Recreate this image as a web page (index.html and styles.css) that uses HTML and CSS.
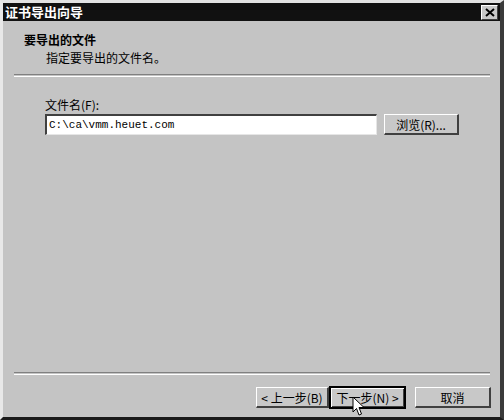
FILE: index.html
```html
<!DOCTYPE html>
<html>
<head>
<meta charset="utf-8" />
<title>证书导出向导</title>
<link rel="stylesheet" href="styles.css">
</head>
<body>
  <section class="wizard">
    <header class="titlebar">
      <span class="title">证书导出向导</span>
      <a class="close" href="javascript:;">
        <svg width="10" height="9" viewBox="0 0 10 9"><path d="M1 1 L9 8 M9 1 L1 8" stroke="#000" stroke-width="2" fill="none"/></svg>
      </a>
    </header>
    <div class="head">
      <h1>要导出的文件</h1>
      <p>指定要导出的文件名。</p>
    </div>
    <div class="rule"></div>
    <div class="body">
      <label class="field-label">文件名(F):</label>
      <div class="field-row">
        <input class="file-input" type="text" value="C:\ca\vmm.heuet.com" />
        <button class="btn browse">浏览(R)...</button>
      </div>
    </div>
    <div class="rule"></div>
    <footer class="actions">
      <button class="btn">&lt; 上一步(B)</button>
      <button class="btn default">下一步(N) &gt;</button>
      <button class="btn cancel">取消</button>
    </footer>
    <svg class="cursor" width="13" height="21" viewBox="0 0 13 21"><path d="M1 1 L1 16 L4.5 12.5 L7 19 L9.5 18 L7 11.5 L12 11.5 Z" fill="#fff" stroke="#000" stroke-width="1"/></svg>
  </section>
</body>
</html>
```

FILE: styles.css
```css
html, body {
  width: 100%;
  height: 100%;
}
body {
  margin: 0;
  overflow: hidden;
  background: #c4c4c4;
  font-family: "Noto Sans CJK SC", "DejaVu Sans", sans-serif;
  font-size: 12px;
  color: #000;
}
.wizard {
  position: relative;
  width: 504px;
  height: 420px;
  box-sizing: border-box;
  display: flex;
  flex-direction: column;
  background: #c4c4c4;
  border-top: 3px solid #e2e2e2;
  border-left: 3px solid #e8e8e8;
  border-right: 4px solid #3a3a3a;
  border-bottom: 3px solid #1a1a1a;
}
.titlebar {
  height: 18px;
  display: flex;
  align-items: center;
  justify-content: space-between;
  padding: 0 2px 0 2px;
  background: #111;
}
.title {
  color: #fff;
  font-weight: bold;
  font-size: 13px;
  line-height: 18px;
}
.close {
  width: 15px;
  height: 13px;
  display: flex;
  align-items: center;
  justify-content: center;
  background: #c8c8c8;
  border-top: 1px solid #fff;
  border-left: 1px solid #fff;
  border-right: 1px solid #404040;
  border-bottom: 1px solid #404040;
}
.head {
  height: 53px;
  padding: 12px 0 0 21px;
  box-sizing: border-box;
}
.head h1 {
  margin: 0;
  font-size: 12px;
  line-height: 14px;
  font-weight: bold;
}
.head p {
  margin: 4px 0 0 22px;
  line-height: 14px;
}
.rule {
  margin: 0 10px 0 11px;
  height: 1px;
  border-top: 1px solid #808080;
  border-bottom: 1px solid #fff;
}
.body {
  flex: 1;
  padding: 20px 0 0 42px;
}
.field-label {
  display: block;
  line-height: 16px;
  margin-bottom: 1px;
}
.field-row {
  display: flex;
  align-items: center;
  gap: 6px;
}
.file-input {
  width: 332px;
  height: 21px;
  box-sizing: border-box;
  margin: 0;
  padding: 0 2px;
  background: #fff;
  border-top: 2px solid #404040;
  border-left: 2px solid #404040;
  border-right: 1px solid #e6e6e6;
  border-bottom: 1px solid #e6e6e6;
  font-family: "Liberation Mono", monospace;
  font-size: 11px;
  color: #000;
  outline: none;
}
.btn {
  width: 75px;
  height: 21px;
  box-sizing: border-box;
  margin: 0;
  padding: 0;
  background: #c8c8c8;
  border-top: 1px solid #fff;
  border-left: 1px solid #fff;
  border-right: 2px solid #404040;
  border-bottom: 2px solid #404040;
  font-family: "Noto Sans CJK SC", "DejaVu Sans", sans-serif;
  font-size: 12px;
  color: #000;
}
.browse {
  margin-left: 1px;
}
.actions {
  height: 42px;
  display: flex;
  align-items: flex-start;
  padding: 12px 9px 0 0;
  justify-content: flex-end;
  box-sizing: border-box;
}
.actions .btn {
  width: 73px;
}
.actions .default {
  width: 75px;
  margin-left: 1px;
  outline: 1px solid #000;
  border: 1px solid #000;
  box-shadow: inset 1px 1px 0 #fff, inset -1px -1px 0 #404040;
}
.actions .cancel {
  width: 76px;
  margin-left: 10px;
}
.cursor {
  position: absolute;
  left: 349px;
  top: 393px;
}
```
